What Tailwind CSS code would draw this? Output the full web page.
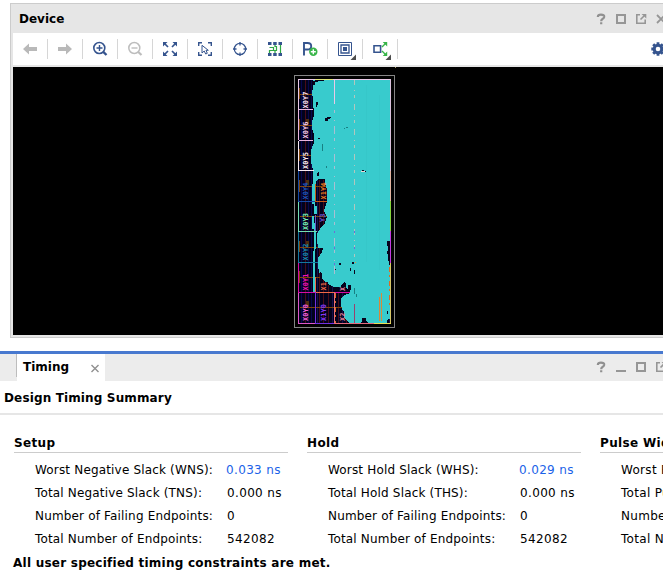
<!DOCTYPE html>
<html lang="en">
<head>
<meta charset="utf-8">
<title>Device</title>
<script src="https://cdn.jsdelivr.net/npm/@tailwindcss/browser@4"></script>
</head>
<body class="w-[663px] h-[588px] overflow-hidden bg-white text-black text-[13px] font-['DejaVu_Sans',sans-serif]">
<svg class="hidden">
  <symbol id="help" viewBox="0 0 20 20"><path d="M6.8 8Q7 5.7 10 5.7Q13.400 5.7 13.200 7.900Q13 9.4 11.200 10.300Q10.200 10.900 10.200 12.200M10.200 13.2V15.3" fill="none" stroke="#909090" stroke-width="2.200"/></symbol>
  <symbol id="max" viewBox="0 0 20 20"><path d="M6 6H14V14H6Z" fill="none" stroke="#969696" stroke-width="2"/></symbol>
  <symbol id="min" viewBox="0 0 20 20"><path d="M5 14H15" stroke="#969696" stroke-width="2"/></symbol>
  <symbol id="float" viewBox="0 0 20 20"><path d="M9 5.8H5.8V14.2H14.2V10.5" fill="none" stroke="#969696" stroke-width="1.6"/><path d="M9.5 10.5L13 7" stroke="#969696" stroke-width="1.6"/><path d="M10.5 5H15.3V9.5Z" fill="#969696"/></symbol>
  <symbol id="close" viewBox="0 0 20 20"><path d="M6 6L14 14M14 6L6 14" stroke="#969696" stroke-width="1.8"/></symbol>
</svg>
<div class="flex flex-col w-[671px]">
  <section class="mt-[3px] ml-[10px] h-[335px] border border-r-0 border-[#cccccc] bg-[#e6e6e6] pl-[2px]">
    <header class="h-[29px] flex items-center">
      <h2 class="pl-[6px] text-[12px] font-bold leading-[14px]">Device</h2>
      <div class="ml-auto flex">
        <svg class="size-5"><use href="#help"/></svg><svg class="size-5"><use href="#max"/></svg><svg class="size-5"><use href="#float"/></svg><svg class="size-5"><use href="#close"/></svg>
      </div>
    </header>
    <div class="h-[32px] bg-white flex items-center">
      <div class="w-[35px] h-5 border-r border-[#d6d6d6] flex justify-center"><svg class="size-5 shrink-0" viewBox="0 0 20 20"><path d="M3 10L9 4.5V8H17V12H9V15.5Z" fill="#b9b9b9"/></svg></div>
      <div class="w-[35px] h-5 border-r border-[#d6d6d6] flex justify-center"><svg class="size-5 shrink-0" viewBox="0 0 20 20"><path d="M17 10L11 4.5V8H3V12H11V15.5Z" fill="#b9b9b9"/></svg></div>
      <div class="w-[35px] h-5 border-r border-[#d6d6d6] flex justify-center"><svg class="size-5 shrink-0" viewBox="0 0 20 20" fill="none" stroke="#35548e"><circle cx="9.3" cy="9" r="5.5" stroke-width="1.6"/><path d="M6.5 9H12.5M9.5 6V12" stroke-width="1.4"/><path d="M13 12.7L16.5 16" stroke-width="2.4"/></svg></div>
      <div class="w-[35px] h-5 border-r border-[#d6d6d6] flex justify-center"><svg class="size-5 shrink-0" viewBox="0 0 20 20" fill="none" stroke="#bdbdbd"><circle cx="9.3" cy="9" r="5.5" stroke-width="1.5"/><path d="M6.5 9H12.5" stroke-width="1.4"/><path d="M13 12.7L16.5 16" stroke-width="2.2"/></svg></div>
      <div class="w-[35px] h-5 border-r border-[#d6d6d6] flex justify-center"><svg class="size-5 shrink-0" viewBox="0 0 20 20"><path d="M3 3H7.500L3 7.500ZM17 3V7.500L12.500 3ZM3 17V12.500L7.500 17ZM17 17H12.500L17 12.500Z" fill="#35548e"/><path d="M4 4L8 8M16 4L12 8M4 16L8 12M16 16L12 12" stroke="#35548e" stroke-width="1.7"/></svg></div>
      <div class="w-[35px] h-5 border-r border-[#d6d6d6] flex justify-center"><svg class="size-5 shrink-0" viewBox="0 0 20 20" fill="none" stroke="#35548e"><path d="M3.7 7V3.7H7M13 3.7H16.3V7M3.7 13V16.3H7M13 16.3H16.3V13" stroke-width="1.4"/><path d="M7 6.3V14L9.2 12L10.7 15L12.3 14.3L11 11.3H13.3Z" stroke-width="1"/></svg></div>
      <div class="w-[35px] h-5 border-r border-[#d6d6d6] flex justify-center"><svg class="size-5 shrink-0" viewBox="0 0 20 20" fill="none" stroke="#35548e"><circle cx="10" cy="10" r="5.700" stroke-width="1.200"/><path d="M10 3V6.500M10 13.500V17M3 10H6.500M13.500 10H17" stroke-width="1.300"/></svg></div>
      <div class="w-[35px] h-5 border-r border-[#d6d6d6] flex justify-center"><svg class="size-5 shrink-0" viewBox="0 0 20 20"><path d="M3 3h3.5v3H3zM8.2 3h3.5v3H8.2zM13.5 3H17v3h-3.5zM3 14h3.5v3H3zM8.2 14h3.5v3H8.2zM13.5 14H17v3h-3.5z" fill="#35548e"/><path d="M4.500 8.500H8.500V11.500H4.500V14M10 6V7.500H11.500V11.500H10V14M6 11.500H11.500M15.500 6V14" fill="none" stroke="#2fa844" stroke-width="1.2"/></svg></div>
      <div class="w-[35px] h-5 border-r border-[#d6d6d6] flex justify-center"><svg class="size-5 shrink-0" viewBox="0 0 20 20"><path d="M4 16.5V4H7.5Q11.2 4 11.2 7.2Q11.2 10.5 7.5 10.5H4" fill="none" stroke="#35548e" stroke-width="1.9"/><circle cx="13.3" cy="12.7" r="4.2" fill="#38b549"/><path d="M10.8 12.7H15.8M13.3 10.2V15.2" stroke="#fff" stroke-width="1.4"/></svg></div>
      <div class="w-[35px] h-5 border-r border-[#d6d6d6] flex justify-center"><svg class="size-5 shrink-0 overflow-visible" viewBox="0 0 20 20"><g fill="none" stroke="#35548e"><path d="M3.500 3.500H16.500V16.500H3.500Z" stroke-width="1"/><path d="M6 6H14V14H6Z" stroke-width="1.3"/></g><path d="M8 8H12V12H8Z" fill="#35548e"/><path d="M21 15.5V21H15.5Z" fill="#4d4d4d"/></svg></div>
      <div class="w-[35px] h-5 border-r border-[#d6d6d6] flex justify-center"><svg class="size-5 shrink-0 overflow-visible" viewBox="0 0 20 20"><path d="M4 6.7H10.6V13.3H4Z" fill="none" stroke="#35548e" stroke-width="1.6"/><path d="M17.2 3V7.5L12.7 3ZM17.2 17V12.5L12.7 17Z" fill="#38b549"/><path d="M12 8L16 4M12 12L16 16" stroke="#38b549" stroke-width="1.4"/><path d="M21 15.5V21H15.5Z" fill="#4d4d4d"/></svg></div>
      <svg class="ml-auto mr-[3px] size-5" viewBox="0 0 20 20"><circle cx="10" cy="10" r="3.8" fill="none" stroke="#35548e" stroke-width="3"/><path d="M10 3.3V6M10 14V16.7M3.3 10H6M14 10H16.7M5.2 5.2L7 7M13 13L14.8 14.8M14.8 5.2L13 7M5.2 14.8L7 13" stroke="#35548e" stroke-width="2.8"/></svg>
    </div>
    <svg class="mt-[2px] block bg-black" width="658" height="268" viewBox="13 67 658 268" shape-rendering="crispEdges">
      <path d="M294.5 75.5H394.5V327.5H294.5Z" fill="none" stroke="#858585"/>
      <path d="M298 79H391V324H298Z" fill="#02021c"/>
      <path d="M301.500 80V323M308.500 80V323M311.500 80V323" stroke="#07074e"/>
      <path d="M305.500 80V323M319.500 180V323M323.500 180V323M328.500 285V323M338.500 293V323M346.500 293V323" stroke="#470c18"/>
      <path d="M317.500 180V323M332.500 285V323M342.500 293V323M389.500 230V323" stroke="#160f4d"/>
      <path d="M300 94.500H313M300 125.500H313M300 155.500H313M300 186.500H327M300 216.500H328M300 247.500H320M300 277.500H322M300 307.500H345" stroke="#7d4308"/>
      <path d="M299.500 88V99M299.500 119V130M299.500 149V161M299.500 180V192M299.500 241V252M299.500 271V283" stroke="#7d4308"/>
      <path d="M306 119h3v5h-3zM306 180h3v5h-3zM306 241h3v5h-3zM306 301h3v5h-3z" fill="#4c3011"/>
      <path d="M313 80L315 80V82L333 79H391V318L387 320V324H369L366 320H363L360 323H349L344 318V312L341 306V298L345 295L350 293V290L345 287V282L341 285V287L334 287L328 284L322 279L320 275L318 267V258L322 252L323 248H318L317 240V234L320 229L325 223L327 217L324 211L327 201V190L325 183V179L318 179L315 182L313 170L311 162V150L314 143V134L312 128V121L314 116V111L313 104V98L312 93L313 88Z" fill="#38cbcd"/>
      <path d="M313 170h3v23h-1v13h2v8h-3v9h2v26h-1v44h-2v-42h1v-22h-2v-13h2v-12h-2v-20h1z" fill="#38cbcd"/>
      <path d="M315 79h2v2h-2v4h-2v-4h2zM322 79h12v1h-12zM325 118l3-1h3v1h-1v1h-2v2h-3zM316 102h2v3h-1v2h-1zM318 138h2v1h-2zM318 172h1v4h-2v-3h1zM361 171h1v-1h2v1h2v1h-5zM354 270h1v4h-1zM352 262h2v2h-2zM335 269h1v1h-1zM339 263h2v2h-2zM350 268h1v3h-1zM343 283h3v5h-3zM348 285h3v5h-3zM344 290h6v2h-6zM320 272l2 1v8h-2zM325 282h3v2h-3zM387 241h3v24h-1v-4h-1v-7h-1v-3h1v-5h-1zM387 311h1v3h-1zM362 318h4v3h-4z" fill="#08041d"/>
      <path d="M326 166h1v2h-1zM322 144h1v7h-1zM346 127h2v1h-2zM344 128h1v1h-1zM354 288h1v6h-1zM356 294h1v3h-1zM324 216h2v1h-2z" fill="#188083"/>
      <path d="M334.500 79V104" stroke="#e9c9e7"/><path d="M334.500 110V275" stroke="#a9bfd2" stroke-dasharray="3 7 1 5 8 4"/>
      <path d="M354.500 79V257" stroke="#b2c7bd" stroke-dasharray="6 5 1 4 3 6"/>
      <path d="M379.500 95V270M366.500 85V262" stroke="#36c7c9"/>
      <g fill="none">
        <path d="M391 79.500H298.500V110" stroke="#e9c9e7"/><path d="M315 79.500H333" stroke="#e4e77b"/>
        <path d="M298.500 109.500H313M298.500 110V140M299 140.500H313" stroke="#e8b6df"/>
        <path d="M298.500 141V170.500H314" stroke="#f6e9f2"/>
        <path d="M298.500 171V201.500H326" stroke="#1549a5"/>
        <path d="M315.500 184V201.500H327" stroke="#c35a16"/>
        <path d="M298.500 202V231.500H317" stroke="#73dfb2"/>
        <path d="M298.500 232V262.500H318" stroke="#13779e"/>
        <path d="M298.500 263V292.500H350" stroke="#d50ca4"/>
        <path d="M315.500 277V292.500H334" stroke="#ef6847"/>
        <path d="M298.500 293V323.500H315" stroke="#dc56c9"/>
        <path d="M315.500 292V323.500H334" stroke="#7130e1"/>
        <path d="M334 323.500H375M334.500 292V323" stroke="#e46b7e"/>
        <path d="M374 323.500H391" stroke="#eddc52"/>
        <path d="M315.500 215V231" stroke="#6753cb"/>
        <path d="M390.500 79V171" stroke="#dac1dc"/><path d="M390.500 171V201" stroke="#e3b5a1"/><path d="M390.500 201V231" stroke="#87d43d"/><path d="M390.500 231V263" stroke="#c33bdf"/><path d="M390.500 263V323" stroke="#d8c668"/>
        <path d="M335.500 293V323M389.500 267V308" stroke="#dd6a21" stroke-dasharray="5 3 2 4"/>
        <path d="M379.500 297V321M381.500 293V321" stroke="#d98938"/>
        <path d="M354.500 304V323" stroke="#9a416f"/>
        <path d="M334.500 231V268M354.500 231V257" stroke="#716bd5" stroke-dasharray="2 14"/>
        <path d="M361 171.500H365" stroke="#e9d9d3"/><path d="M355 262.500H356" stroke="#ef8f38"/>
      </g>
      <g font-family="DejaVu Sans Mono" font-size="7" font-weight="bold">
        <text transform="translate(308 108.500) rotate(-90)" fill="#f4dcf0">X0Y7</text>
        <text transform="translate(308 138.500) rotate(-90)" fill="#f0c6e8">X0Y6</text>
        <text transform="translate(308 169) rotate(-90)" fill="#f6e9f2">X0Y5</text>
        <text transform="translate(308 199.500) rotate(-90)" fill="#1b55bd">X0Y4</text>
        <text transform="translate(326 199.500) rotate(-90)" fill="#e87a20">X1Y4</text>
        <text transform="translate(308 230) rotate(-90)" fill="#73efb8">X0Y3</text>
        <text transform="translate(325 222) rotate(-90)" fill="#6753cb">Y3</text>
        <text transform="translate(308 260.500) rotate(-90)" fill="#1788b4">X0Y2</text>
        <text transform="translate(308 290.500) rotate(-90)" fill="#f012ba">X0Y1</text>
        <text transform="translate(326 290.500) rotate(-90)" fill="#ef6847">X1</text>
        <text transform="translate(345 291) rotate(-90)" fill="#e4839a">X</text>
        <text transform="translate(308 321) rotate(-90)" fill="#f060dc">X0Y0</text>
        <text transform="translate(326 321) rotate(-90)" fill="#8238fa">X1Y0</text>
        <text transform="translate(345 321) rotate(-90)" fill="#e4839a">X2</text>
      </g>
      <path d="M343 304H346V308L349 313V318H345V313L342 309Z" fill="#38cbcd"/>
      <path d="M395 67h1v1h-1z" fill="#a99d63"/>
    </svg>
  </section>

  <section class="mt-[13px] border-t-[3px] border-[#4879cf]">
    <div class="h-[27px] bg-[#ececec] flex">
      <div class="ml-4 w-px h-[23px] bg-[#bdbdbd]"></div>
      <div class="w-[88px] bg-white flex items-center justify-between pl-[6px]">
        <span class="text-[12px] font-bold leading-[14px] pb-px">Timing</span>
        <svg class="size-5"><path d="M6.500 7L13.500 14M13.500 7L6.500 14" stroke="#909090" stroke-width="1.4"/></svg>
      </div>
      <div class="ml-auto flex pt-[3px]">
        <svg class="size-5"><use href="#help"/></svg><svg class="size-5"><use href="#min"/></svg><svg class="size-5"><use href="#max"/></svg><svg class="size-5"><use href="#float"/></svg>
      </div>
    </div>
    <h3 class="h-[34px] border-b-2 border-[#e6e6e6] pl-1 pt-[9px] text-[12px] font-bold leading-[16px] tracking-[0.14px]">Design Timing Summary</h3>
    <div class="flex gap-[19px] pl-[14px] pt-[20px] text-[12px] whitespace-nowrap">
      <div class="w-[274px] shrink-0">
        <h4 class="h-[18px] font-bold leading-[16px] tracking-[0.35px] border-b border-[#cccccc]">Setup</h4>
        <div class="grid grid-cols-[192px_1fr] auto-rows-[23px] pl-[21px] pt-[6px] leading-[23px] tracking-[0.17px]">
          <span>Worst Negative Slack (WNS):</span><span class="text-[#1b62e8] -ml-px tracking-[0.35px]">0.033 ns</span>
          <span>Total Negative Slack (TNS):</span><span class="tracking-[0.35px]">0.000 ns</span>
          <span>Number of Failing Endpoints:</span><span>0</span>
          <span>Total Number of Endpoints:</span><span class="tracking-[0.35px]">542082</span>
        </div>
      </div>
      <div class="w-[274px] shrink-0">
        <h4 class="h-[18px] font-bold leading-[16px] tracking-[0.35px] border-b border-[#cccccc]">Hold</h4>
        <div class="grid grid-cols-[192px_1fr] auto-rows-[23px] pl-[21px] pt-[6px] leading-[23px] tracking-[0.17px]">
          <span>Worst Hold Slack (WHS):</span><span class="text-[#1b62e8] -ml-px tracking-[0.35px]">0.029 ns</span>
          <span>Total Hold Slack (THS):</span><span class="tracking-[0.35px]">0.000 ns</span>
          <span>Number of Failing Endpoints:</span><span>0</span>
          <span>Total Number of Endpoints:</span><span class="tracking-[0.35px]">542082</span>
        </div>
      </div>
      <div class="w-[71px] shrink-0 overflow-hidden">
        <h4 class="h-[18px] font-bold leading-[16px] tracking-[0.35px] border-b border-[#cccccc]">Pulse Width</h4>
        <div class="grid auto-rows-[23px] pl-[21px] pt-[6px] leading-[23px] tracking-[0.3px]">
          <span>Worst Pulse</span>
          <span>Total Pulse</span>
          <span>Number of</span>
          <span>Total Number</span>
        </div>
      </div>
    </div>
    <p class="pl-[13px] pt-[4px] text-[12px] font-bold leading-[16px] tracking-[0.24px]">All user specified timing constraints are met.</p>
  </section>
</div>
</body>
</html>
